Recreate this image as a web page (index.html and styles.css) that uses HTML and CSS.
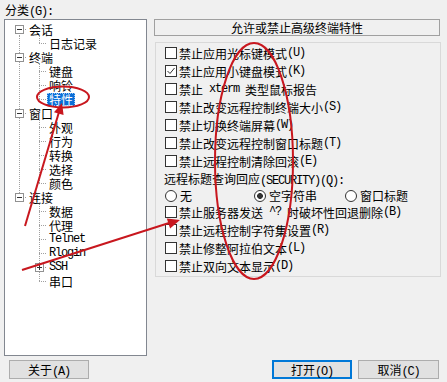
FILE: index.html
```html
<!DOCTYPE html>
<html>
<head>
    <meta charset="utf-8">
    <title>PuTTY 配置 - 特性</title>
    <link rel="stylesheet" href="styles.css">
</head>
<body>
    <div class="dlg">
        <div class="main">
            <div class="side">
                <div class="side-label">分类<span class="m">(G):</span></div>
                <div class="tree">
                    <div class="row"><i class="g first"><b class="exp minus"></b></i><span class="lbl">会话</span></div>
                    <div class="row"><i class="g v"></i><i class="g elb"></i><span class="lbl">日志记录</span></div>
                    <div class="row"><i class="g tee"><b class="exp minus"></b></i><span class="lbl">终端</span></div>
                    <div class="row"><i class="g v"></i><i class="g tee"></i><span class="lbl">键盘</span></div>
                    <div class="row"><i class="g v"></i><i class="g tee"></i><span class="lbl">响铃</span></div>
                    <div class="row"><i class="g v"></i><i class="g elb"></i><span class="lbl sel">特性</span></div>
                    <div class="row"><i class="g tee"><b class="exp minus"></b></i><span class="lbl">窗口</span></div>
                    <div class="row"><i class="g v"></i><i class="g tee"></i><span class="lbl">外观</span></div>
                    <div class="row"><i class="g v"></i><i class="g tee"></i><span class="lbl">行为</span></div>
                    <div class="row"><i class="g v"></i><i class="g tee"></i><span class="lbl">转换</span></div>
                    <div class="row"><i class="g v"></i><i class="g tee"></i><span class="lbl">选择</span></div>
                    <div class="row"><i class="g v"></i><i class="g elb"></i><span class="lbl">颜色</span></div>
                    <div class="row"><i class="g elb"><b class="exp minus"></b></i><span class="lbl">连接</span></div>
                    <div class="row"><i class="g"></i><i class="g tee"></i><span class="lbl">数据</span></div>
                    <div class="row"><i class="g"></i><i class="g tee"></i><span class="lbl">代理</span></div>
                    <div class="row"><i class="g"></i><i class="g tee"></i><span class="lbl m">Telnet</span></div>
                    <div class="row"><i class="g"></i><i class="g tee"></i><span class="lbl m">Rlogin</span></div>
                    <div class="row"><i class="g"></i><i class="g tee"><b class="exp plus"></b></i><span class="lbl m">SSH</span></div>
                    <div class="row"><i class="g"></i><i class="g elb"></i><span class="lbl">串口</span></div>
                </div>
            </div>

            <div class="panel">
                <div class="head">允许或禁止高级终端特性</div>
                <div class="group">
                    <div class="opt"><span class="cb"></span>禁止应用光标键模式<span class="m">(U)</span></div>
                    <div class="opt"><span class="cb"><svg width="10" height="10" viewBox="0 0 10 10"><path d="M1.5 5 L4 7.5 L8.5 2" fill="none" stroke="#333" stroke-width="1"/></svg></span>禁止应用小键盘模式<span class="m">(K)</span></div>
                    <div class="opt"><span class="cb"></span>禁止<span class="m">&nbsp;xterm&nbsp;</span>类型鼠标报告</div>
                    <div class="opt"><span class="cb"></span>禁止改变远程控制终端大小<span class="m">(S)</span></div>
                    <div class="opt"><span class="cb"></span>禁止切换终端屏幕<span class="m">(W)</span></div>
                    <div class="opt"><span class="cb"></span>禁止改变远程控制窗口标题<span class="m">(T)</span></div>
                    <div class="opt"><span class="cb"></span>禁止远程控制清除回滚<span class="m">(E)</span></div>
                    <div class="caption">远程标题查询回应<span class="m">(SECURITY)(Q):</span></div>
                    <div class="radios">
                        <div class="rd"><i></i>无</div>
                        <div class="rd on"><i></i>空字符串</div>
                        <div class="rd"><i></i>窗口标题</div>
                    </div>
                    <div class="opt"><span class="cb"></span>禁止服务器发送<span class="m">&nbsp;^?&nbsp;</span>时破坏性回退删除<span class="m">(B)</span></div>
                    <div class="opt"><span class="cb"></span>禁止远程控制字符集设置<span class="m">(R)</span></div>
                    <div class="opt"><span class="cb"></span>禁止修整阿拉伯文本<span class="m">(L)</span></div>
                    <div class="opt"><span class="cb"></span>禁止双向文本显示<span class="m">(D)</span></div>
                </div>
            </div>
        </div>

        <div class="foot">
            <div class="btn about">关于<span class="m">(A)</span></div>
            <div class="btn open">打开<span class="m">(O)</span></div>
            <div class="btn cancel">取消<span class="m">(C)</span></div>
        </div>
    </div>

    <!-- red hand-drawn marks over the dialog -->
    <svg class="marks" width="447" height="382" viewBox="0 0 447 382">
        <g fill="none" stroke="#c8171e" stroke-width="2">
            <ellipse cx="63" cy="97" rx="26" ry="10.5"/>
            <ellipse cx="254" cy="161" rx="39" ry="118"/>
            <line x1="25" y1="226" x2="59" y2="112"/>
            <line x1="22" y1="270" x2="169" y2="223"/>
        </g>
        <g fill="#c8171e">
            <polygon points="62,103 63.6,115 54,112.2"/>
            <polygon points="180,220 170.1,228.6 166.8,218.6"/>
        </g>
    </svg>
</body>
</html>
```

FILE: styles.css
```css
body {
    margin: 0;
    background: #f0f0f0;
    font-family: "Noto Sans CJK SC", sans-serif;
    font-size: 12px;
    color: #000;
}

.m {
    font-family: "Liberation Mono", monospace;
    letter-spacing: -1.2px;
}

.dlg {
    width: 447px;
    height: 382px;
}

.main {
    display: flex;
    height: 356px;
}

/* left side: category tree */
.side {
    width: 143px;
    margin-left: 4px;
    display: flex;
    flex-direction: column;
}

.side-label {
    height: 19px;
    line-height: 19px;
    padding-left: 1px;
}

.tree {
    flex: 1;
    background: #fff;
    border: 1px solid #828790;
    padding: 2px 0 0 2px;
}

.row {
    display: flex;
    align-items: center;
    height: 14px;
    line-height: 13px;
}

.g {
    flex: none;
    width: 20px;
    height: 100%;
    display: flex;
    align-items: center;
    padding-left: 8px;
    box-sizing: border-box;
    background-repeat: no-repeat;
}

.g.v {
    background-image: repeating-linear-gradient(to bottom, #a0a0a0 0 1px, transparent 1px 2px);
    background-size: 1px 100%;
    background-position: 12px 0;
}

.g.tee {
    background-image:
        repeating-linear-gradient(to bottom, #a0a0a0 0 1px, transparent 1px 2px),
        repeating-linear-gradient(to right, #a0a0a0 0 1px, transparent 1px 2px);
    background-size: 1px 100%, 8px 1px;
    background-position: 12px 0, 12px 7px;
}

.g.elb {
    background-image:
        repeating-linear-gradient(to bottom, #a0a0a0 0 1px, transparent 1px 2px),
        repeating-linear-gradient(to right, #a0a0a0 0 1px, transparent 1px 2px);
    background-size: 1px 7px, 8px 1px;
    background-position: 12px 0, 12px 7px;
}

.g.first {
    background-image:
        repeating-linear-gradient(to bottom, #a0a0a0 0 1px, transparent 1px 2px),
        repeating-linear-gradient(to right, #a0a0a0 0 1px, transparent 1px 2px);
    background-size: 1px 7px, 8px 1px;
    background-position: 12px 7px, 12px 7px;
}

.exp {
    width: 7px;
    height: 7px;
    border: 1px solid #919191;
    background-color: #fff;
    background-repeat: no-repeat;
}

.exp.minus {
    background-image: linear-gradient(#333, #333);
    background-size: 5px 1px;
    background-position: 1px 3px;
}

.exp.plus {
    background-image: linear-gradient(#333, #333), linear-gradient(#333, #333);
    background-size: 5px 1px, 1px 5px;
    background-position: 1px 3px, 3px 1px;
}

.lbl {
    padding: 0 2px;
    line-height: 13px;
    white-space: nowrap;
}

.lbl.sel {
    background: #0a6fd8;
    color: #fff;
    outline: 1px dotted #9cc8f5;
    outline-offset: -1px;
}

/* right side: options */
.panel {
    margin-left: 7px;
    width: 287px;
    padding-top: 19px;
}

.head {
    width: 284px;
    height: 15px;
    border: 1px solid #a0a0a0;
    line-height: 15px;
    text-align: center;
}

.group {
    margin-top: 6px;
    margin-left: 1px;
    height: 232px;
    border: 1px solid #d9d9d9;
    padding: 1px 0 0 9px;
}

.opt {
    display: flex;
    align-items: center;
    height: 18px;
    white-space: nowrap;
}

.cb {
    flex: none;
    width: 10px;
    height: 10px;
    border: 1px solid #333;
    background: #fff;
    margin-right: 2px;
    display: flex;
}

.caption {
    height: 17px;
    line-height: 17px;
    margin-left: -1px;
    white-space: nowrap;
}

.radios {
    display: grid;
    grid-template-columns: 89px 91px auto;
    height: 16px;
    align-items: center;
}

.rd {
    display: flex;
    align-items: center;
    white-space: nowrap;
}

.rd i {
    width: 10px;
    height: 10px;
    border: 1px solid #333;
    border-radius: 50%;
    background: #fff;
    margin-right: 3px;
}

.rd.on i {
    background: radial-gradient(circle, #333 0 2.6px, #fff 3.2px);
}

/* bottom buttons */
.foot {
    display: flex;
    margin-top: 4px;
    padding: 0 8px 0 9px;
}

.btn {
    box-sizing: border-box;
    height: 19px;
    line-height: 17px;
    border: 1px solid #adadad;
    background: #e1e1e1;
    text-align: center;
}

.about {
    width: 80px;
}

.open {
    width: 80px;
    margin-left: auto;
    border: 2px solid #0078d7;
    line-height: 15px;
}

.cancel {
    width: 81px;
    margin-left: 6px;
}

.marks {
    position: absolute;
    left: 0;
    top: 0;
    pointer-events: none;
}
```
